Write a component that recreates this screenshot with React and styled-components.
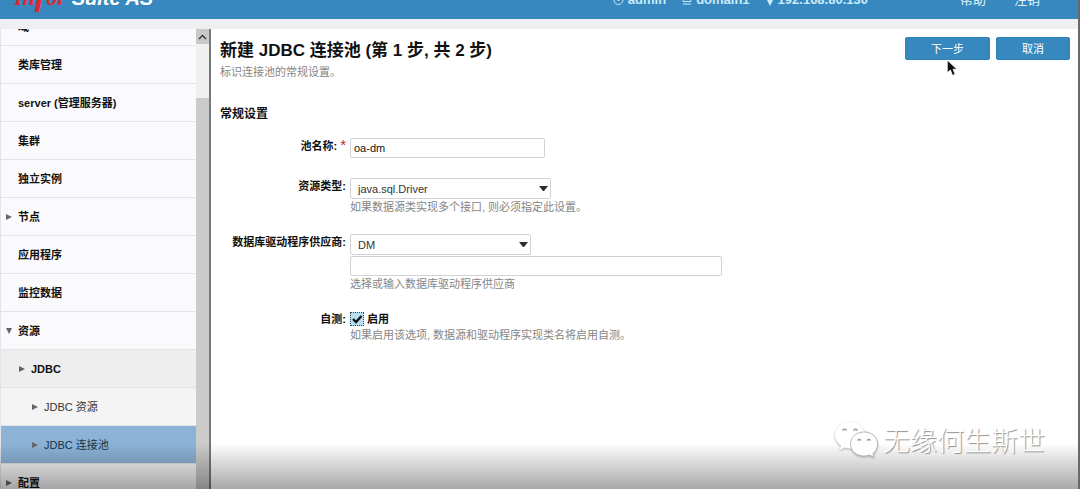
import React from "react";
import styled, { createGlobalStyle } from "styled-components";

const BLUE = "#3688bf";
const SANS = '"Liberation Sans", "Noto Sans CJK SC", sans-serif';

const GlobalStyle = createGlobalStyle`
  *, *::before, *::after { box-sizing: border-box; }
  body {
    margin: 0;
    background: #fff;
    color: #111;
    font: 11px/16px ${SANS};
    overflow: hidden;
  }
  button, input, select { font: inherit; color: inherit; }
`;

const Page = styled.div`
  position: relative;
  display: flex;
  flex-direction: column;
  height: 100vh;
  overflow: hidden;
  border-right: 2px solid #68696b;
`;

const Header = styled.header`
  flex: none;
  display: flex;
  align-items: flex-end;
  height: 19px;
  padding: 0 38px 11px 14px;
  background: ${BLUE};
  color: #fff;
`;

const Logo = styled.a`
  display: flex;
  align-items: baseline;
  gap: 6px;
  color: #fff;
  text-decoration: none;
  font: italic bold 20px/20px ${SANS};
`;

const LogoScript = styled.span`
  color: #e0262f;
  font: italic bold 22px/20px "Liberation Serif", serif;
`;

const LogoTall = styled.span`
  font-size: 34px;
`;

const Status = styled.ul`
  display: flex;
  gap: 16px;
  margin: 0 0 0 auto;
  padding: 0;
  list-style: none;
  font-size: 13px;
  font-weight: bold;
  color: #c9ecfb;
`;

const StatusItem = styled.li`
  display: flex;
  align-items: center;
  gap: 4px;
`;

const HeaderNav = styled.nav`
  display: flex;
  gap: 28px;
  margin-left: 92px;
`;

const HeaderLink = styled.a`
  color: #e2f4fc;
  text-decoration: none;
  font-size: 13px;
`;

const Strip = styled.div`
  flex: none;
  height: 10px;
  background: #efeff2;
`;

const Body = styled.div`
  flex: 1;
  display: flex;
  min-height: 0;
`;

const Sidebar = styled.aside`
  flex: none;
  display: flex;
  width: 211px;
  border-right: 2px solid #77787b;
  overflow: hidden;
`;

const Tree = styled.nav`
  flex: 1;
  margin-top: -21px;
  border-left: 1px solid #e4e4e8;
`;

const rowColors = { plain: "#fafafc", group: "#eeeeef", leaf: "#f4f4f4", active: "#8cb3d6" };

const TreeRow = styled.a`
  display: flex;
  align-items: center;
  gap: 6px;
  height: 38px;
  padding-left: ${(p) => 5 + p.$level * 13}px;
  border-bottom: 1px solid #e2e3e6;
  background: ${(p) => rowColors[p.$tone]};
  color: ${(p) => (p.$tone === "active" ? "#16324c" : p.$level > 1 ? "#333" : "#111")};
  font-weight: ${(p) => (p.$level > 1 ? "normal" : "bold")};
  text-decoration: none;
`;

const ArrowSlot = styled.svg`
  flex: none;
  width: 6px;
  height: 6px;
  fill: #666;
`;

const Scrollbar = styled.div`
  flex: none;
  display: flex;
  flex-direction: column;
  width: 13px;
  background: #f0f0f1;
`;

const ScrollUp = styled.button`
  display: flex;
  align-items: center;
  justify-content: center;
  height: 15px;
  margin-bottom: 54px;
  padding: 0;
  border: 0;
  background: #c9c9ca;
`;

const ScrollThumb = styled.div`
  flex: 1;
  background: #cbcbcc;
`;

const Main = styled.main`
  flex: 1;
  min-width: 0;
  padding: 8px 8px 0 9px;
`;

const TitleBar = styled.div`
  display: flex;
  align-items: flex-start;
  justify-content: space-between;
`;

const Title = styled.h1`
  margin: 0;
  font-size: 17px;
  line-height: 27px;
`;

const Hint = styled.p`
  margin: 0;
  color: #858585;
`;

const Actions = styled.div`
  display: flex;
  gap: 6px;
`;

const ActionWrap = styled.div`
  position: relative;
`;

const Action = styled.button`
  width: ${(p) => (p.$wide ? 85 : 74)}px;
  height: 23px;
  padding: 0;
  border: 1px solid #2f83bb;
  border-radius: 2px;
  background: ${BLUE};
  color: #fff;
`;

const Pointer = styled.svg`
  position: absolute;
  left: 41px;
  top: 22px;
  width: 12px;
  height: 18px;
`;

const SectionTitle = styled.h2`
  margin: 24px 0 14px;
  font-size: 12px;
  line-height: 20px;
`;

const Form = styled.form`
  display: flex;
  flex-direction: column;
  gap: 19px;
`;

const Row = styled.div`
  display: flex;
  align-items: flex-start;
  gap: 4px;
  min-height: 21px;
`;

const Label = styled.label`
  flex: none;
  width: 126px;
  text-align: right;
  font-weight: bold;
  white-space: nowrap;
`;

const Required = styled.span`
  margin-left: 3px;
  color: #c8203c;
  font-weight: normal;
  font-size: 15px;
  line-height: 12px;
`;

const Field = styled.div`
  flex: 1;
  min-width: 0;
`;

const TextInput = styled.input`
  display: block;
  width: ${(p) => (p.$wide ? 372 : 195)}px;
  max-width: 100%;
  height: 20px;
  margin-top: ${(p) => (p.$wide ? 1 : 0)}px;
  padding: 0 3px;
  border: 1px solid #d2d2d4;
  border-radius: 2px;
  background: #fff;
  outline: 0;
`;

const SelectWrap = styled.div`
  position: relative;
  width: ${(p) => (p.$wide ? 201 : 181)}px;
`;

const Select = styled.select`
  display: block;
  appearance: none;
  width: 100%;
  height: 21px;
  padding: 0 20px 0 7px;
  border: 1px solid #d2d2d4;
  border-radius: 2px;
  background: #fff;
  color: #333;
`;

const SelectArrow = styled.svg`
  position: absolute;
  right: 3px;
  top: 8px;
  width: 9px;
  height: 5px;
  fill: #2d2d2d;
  pointer-events: none;
`;

const CheckLine = styled.div`
  display: flex;
  align-items: center;
  gap: 3px;
  height: 16px;
`;

const CheckWrap = styled.span`
  position: relative;
  width: 14px;
  height: 14px;
`;

const Checkbox = styled.input`
  display: block;
  appearance: none;
  width: 14px;
  height: 14px;
  margin: 0;
  border: 1px dotted #2c4a5a;
  background: #b9def0;
`;

const CheckMark = styled.svg`
  position: absolute;
  inset: 0;
  width: 14px;
  height: 14px;
  pointer-events: none;
`;

const CheckLabel = styled.label`
  font-weight: bold;
`;

const Shade = styled.div`
  position: absolute;
  left: 0;
  right: -2px;
  bottom: 0;
  height: 46px;
  background: linear-gradient(rgba(0, 0, 0, 0), rgba(0, 0, 0, 0.34));
  pointer-events: none;
`;

const Watermark = styled.div`
  position: absolute;
  right: 33px;
  bottom: 29px;
  display: flex;
  align-items: center;
  gap: 5px;
  color: #fff;
  font: 300 27px/40px "Noto Sans CJK SC", sans-serif;
  text-shadow: 1px 1px 1px #8a8a8a;
`;

const WechatMark = styled.svg`
  width: 44px;
  height: 38px;
  filter: drop-shadow(0 1px 1px #aaa);
`;

const treeItems = [
  { text: "域", level: 0 },
  { text: "类库管理", level: 0 },
  { text: "server (管理服务器)", level: 0 },
  { text: "集群", level: 0 },
  { text: "独立实例", level: 0 },
  { text: "节点", level: 0, arrow: "right" },
  { text: "应用程序", level: 0 },
  { text: "监控数据", level: 0 },
  { text: "资源", level: 0, arrow: "down" },
  { text: "JDBC", level: 1, arrow: "right", tone: "group" },
  { text: "JDBC 资源", level: 2, arrow: "right", tone: "leaf" },
  { text: "JDBC 连接池", level: 2, arrow: "right", tone: "active" },
  { text: "配置", level: 0, arrow: "right" },
];

function TreeArrow({ dir }) {
  return (
    <ArrowSlot viewBox="0 0 6 6" aria-hidden="true">
      {dir === "right" && <path d="M0 0L6 3L0 6Z" />}
      {dir === "down" && <path d="M0 0H6L3 6Z" />}
    </ArrowSlot>
  );
}

function Dropdown({ id, value, wide }) {
  return (
    <SelectWrap $wide={wide}>
      <Select id={id} defaultValue={value}>
        <option>{value}</option>
      </Select>
      <SelectArrow viewBox="0 0 9 5" aria-hidden="true">
        <path d="M0 0H9L5 5H4Z" />
      </SelectArrow>
    </SelectWrap>
  );
}

export default function App() {
  return (
    <Page>
      <GlobalStyle />
      <Header>
        <Logo href="#home">
          <LogoScript>In<LogoTall>f</LogoTall>or</LogoScript>
          <span>Suite AS</span>
        </Logo>
        <Status>
          <StatusItem>
            <svg width="11" height="12" viewBox="0 0 11 12" fill="none" stroke="currentColor" aria-hidden="true">
              <circle cx="5.5" cy="6" r="4.5" />
              <circle cx="5.5" cy="5" r="1.5" />
            </svg>
            admin
          </StatusItem>
          <StatusItem>
            <svg width="10" height="10" viewBox="0 0 10 10" fill="none" stroke="currentColor" aria-hidden="true">
              <path d="M1 1.5H9V6.5H1ZM1 9H9" />
            </svg>
            domain1
          </StatusItem>
          <StatusItem>
            <svg width="8" height="11" viewBox="0 0 8 11" fill="currentColor" aria-hidden="true">
              <path d="M4 11L1 5A3 3 0 1 1 7 5Z" />
            </svg>
            192.168.80.130
          </StatusItem>
        </Status>
        <HeaderNav>
          <HeaderLink href="#help">帮助</HeaderLink>
          <HeaderLink href="#logout">注销</HeaderLink>
        </HeaderNav>
      </Header>
      <Strip />
      <Body>
        <Sidebar>
          <Tree>
            {treeItems.map((item) => (
              <TreeRow key={item.text} href="#tree" $level={item.level} $tone={item.tone || "plain"}>
                <TreeArrow dir={item.arrow} />
                {item.text}
              </TreeRow>
            ))}
          </Tree>
          <Scrollbar>
            <ScrollUp type="button" aria-label="向上滚动">
              <svg width="9" height="6" viewBox="0 0 9 6" fill="none" stroke="#333" strokeWidth="1.3" aria-hidden="true">
                <path d="M1 5L4.5 1.5L8 5" />
              </svg>
            </ScrollUp>
            <ScrollThumb />
          </Scrollbar>
        </Sidebar>
        <Main>
          <TitleBar>
            <div>
              <Title>新建 JDBC 连接池 (第 1 步, 共 2 步)</Title>
              <Hint>标识连接池的常规设置。</Hint>
            </div>
            <Actions>
              <ActionWrap>
                <Action type="button" $wide>下一步</Action>
                <Pointer viewBox="0 0 11 17" aria-hidden="true">
                  <path d="M1 1V13L4 10.5L6 15.5L8.5 14.5L6.5 9.7H10.2Z" fill="#111" stroke="#fff" strokeWidth="0.8" />
                </Pointer>
              </ActionWrap>
              <Action type="button">取消</Action>
            </Actions>
          </TitleBar>
          <SectionTitle>常规设置</SectionTitle>
          <Form>
            <Row>
              <Label htmlFor="pool">池名称:<Required>*</Required></Label>
              <Field>
                <TextInput id="pool" defaultValue="oa-dm" />
              </Field>
            </Row>
            <Row>
              <Label htmlFor="type">资源类型:</Label>
              <Field>
                <Dropdown id="type" value="java.sql.Driver" wide />
                <Hint>如果数据源类实现多个接口, 则必须指定此设置。</Hint>
              </Field>
            </Row>
            <Row>
              <Label htmlFor="vendor">数据库驱动程序供应商:</Label>
              <Field>
                <Dropdown id="vendor" value="DM" />
                <TextInput $wide aria-label="数据库驱动程序供应商" />
                <Hint>选择或输入数据库驱动程序供应商</Hint>
              </Field>
            </Row>
            <Row>
              <Label as="span">自测:</Label>
              <Field>
                <CheckLine>
                  <CheckWrap>
                    <Checkbox id="ping" type="checkbox" defaultChecked />
                    <CheckMark viewBox="0 0 14 14" fill="none" stroke="#111" strokeWidth="2.4" aria-hidden="true">
                      <path d="M3 7L6 10L11.5 4" />
                    </CheckMark>
                  </CheckWrap>
                  <CheckLabel htmlFor="ping">启用</CheckLabel>
                </CheckLine>
                <Hint>如果启用该选项, 数据源和驱动程序实现类名将启用自测。</Hint>
              </Field>
            </Row>
          </Form>
        </Main>
      </Body>
      <Shade />
      <Watermark>
        <WechatMark viewBox="0 0 44 38" aria-hidden="true">
          <path d="M16 1C7 1 1 7 1 14C1 18.500 3.500 22 7 24.500L5.500 29L11 26.500C13 27.300 15 27.500 17 27.500C28 27 31 20 31 14C30 6 24 1 16 1Z" fill="#fff" />
          <path d="M30 11C21.500 11 16.500 17 16.500 23C16.500 30 22.500 35 30 35C32 35 34 34.600 35.500 34L40 36.500L39 32.500C42 30 43.500 27 43.500 23C43.500 16.500 38 11 30 11Z" fill="#fff" stroke="#aaa" strokeWidth="0.8" />
          <g fill="none" stroke="#999" strokeWidth="1.300">
            <path d="M8.500 9.500Q10.500 7 12.500 9.500M19.500 9.500Q21.500 7 23.500 9.500" />
            <path d="M23.500 19.500Q25.500 17.500 27 19.500M33 19.500Q35 17.500 36.500 19.500" />
          </g>
        </WechatMark>
        无缘何生斯世
      </Watermark>
    </Page>
  );
}
